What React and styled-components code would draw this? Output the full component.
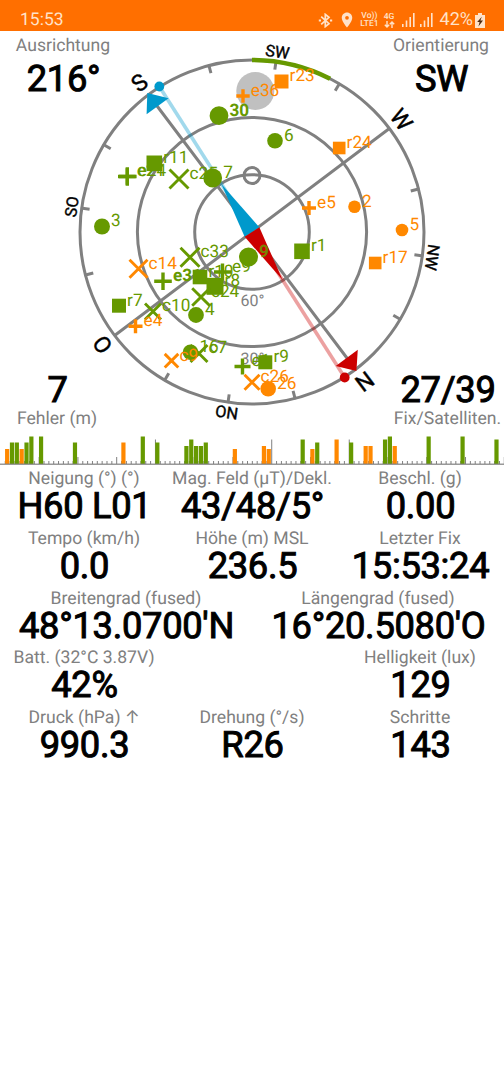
import React from 'react';
import styled, { createGlobalStyle } from 'styled-components';
import { MdLocationOn } from 'react-icons/md';

const GREEN = '#669900';
const ORANGE = '#ff8800';
const GREY = '#808080';
const BLUE = '#0099cc';
const RED = '#cc0000';

const CX = 252;
const CY = 201;
const R = 172;
const NORTH = 143;
const MAGNETIC = 147.5;

// Point on the dial, bearing in degrees clockwise from the top
const polar = (bearing, r) => {
  const a = (bearing * Math.PI) / 180;
  return [CX + r * Math.sin(a), CY - r * Math.cos(a)];
};
const points = list => list.map(p => p.join(',')).join(' ');

// y is measured from the top of the dial panel
const satellites = [
  { id: '9', shape: 'circle', x: 248.5, y: 226, r: 9.5, bold: true, labelColor: '#7a8200' },
  { id: 'e36', shape: 'plus', x: 243, y: 65, r: 6.7, color: ORANGE },
  { id: 'r23', shape: 'square', x: 281.5, y: 50.5, r: 7, color: ORANGE },
  { id: '30', shape: 'circle', x: 219, y: 84.7, r: 9.4, bold: true },
  { id: '6', shape: 'circle', x: 275, y: 109.7, r: 7.8 },
  { id: 'r24', shape: 'square', x: 339.2, y: 117, r: 6.3, color: ORANGE },
  { id: 'e5', shape: 'plus', x: 309, y: 177, r: 7, color: ORANGE },
  { id: '2', shape: 'circle', x: 354.5, y: 175.7, r: 6.3, color: ORANGE },
  { id: '5', shape: 'circle', x: 402, y: 199, r: 6.3, color: ORANGE },
  { id: 'r17', shape: 'square', x: 375.2, y: 232, r: 6.3, color: ORANGE },
  { id: 'r1', shape: 'square', x: 302, y: 220.3, r: 7.8 },
  { id: 'r11', shape: 'square', x: 154.3, y: 132.3, r: 7.8 },
  { id: 'e24', shape: 'plus', x: 127.3, y: 145.5, r: 9.3 },
  { id: 'e21', shape: 'plus', x: 127.3, y: 145.5, r: 8.3 },
  { id: 'c25', shape: 'cross', x: 179, y: 148, r: 9.5 },
  { id: '7', shape: 'circle', x: 212.7, y: 147, r: 9.4 },
  { id: '3', shape: 'circle', x: 102, y: 195.5, r: 8 },
  { id: 'c33', shape: 'cross', x: 190, y: 226.3, r: 9.5 },
  { id: 'c14', shape: 'cross', x: 138.5, y: 237.7, r: 9, color: ORANGE },
  { id: 'e31', shape: 'plus', x: 163, y: 250.3, r: 8.8, bold: true },
  { id: 'e9', shape: 'plus', x: 222.5, y: 241, r: 8.5 },
  { id: 'r10', shape: 'square', x: 200, y: 246, r: 7.3 },
  { id: 'r8', shape: 'square', x: 215, y: 255.3, r: 8.5 },
  { id: 'c24', shape: 'cross', x: 201, y: 266, r: 8.8 },
  { id: '4', shape: 'circle', x: 196, y: 284, r: 7.9 },
  { id: 'r7', shape: 'square', x: 119, y: 274.7, r: 7 },
  { id: 'c10', shape: 'cross', x: 153, y: 280.5, r: 8 },
  { id: 'e4', shape: 'plus', x: 135.5, y: 295.3, r: 7, color: ORANGE },
  { id: '16', shape: 'circle', x: 190.5, y: 321.2, r: 7.8 },
  { id: 'c7', shape: 'cross', x: 199, y: 322.5, r: 8.5 },
  { id: 'c9', shape: 'cross', x: 171.5, y: 329.7, r: 6.8, color: ORANGE },
  { id: 'e1', shape: 'plus', x: 242.5, y: 335.5, r: 8 },
  { id: 'r9', shape: 'square', x: 265.3, y: 331.3, r: 7 },
  { id: 'c26', shape: 'cross', x: 252, y: 351.3, r: 7.5, color: ORANGE },
  { id: '26', shape: 'circle', x: 268.2, y: 357.7, r: 7.8, color: ORANGE },
];

// [slot, height, weak]
const signals = [
  [1, 15, true], [2, 21.5], [3, 21.5], [4, 15, true], [5, 21.5], [6, 27.5], [8, 27.5],
  [15, 21.5], [25, 21.5, true], [29, 27.5], [32, 21.5], [38, 18], [39, 24.5], [40, 18],
  [41, 18], [42, 21.5], [48, 15, true], [54, 18, true], [55, 15, true], [62, 24.5],
  [64, 15, true], [65, 21.5], [69, 24.5, true], [72, 21.5], [75, 18, true], [76, 18, true],
  [79, 24.5], [80, 27.5], [81, 18, true], [88, 27.5], [95, 27.5], [102, 24.5],
];
const SLOT = 4.845;
const groupStarts = [32, 56, 72];

const rows = [
  [['Neigung (°) (°)', 'H60 L01'], ['Mag. Feld (µT)/Dekl.', '43/48/5°'], ['Beschl. (g)', '0.00']],
  [['Tempo (km/h)', '0.0'], ['Höhe (m) MSL', '236.5'], ['Letzter Fix', '15:53:24']],
  [['Breitengrad (fused)', "48°13.0700'N"], ['Längengrad (fused)', "16°20.5080'O"]],
  [['Batt. (32°C 3.87V)', '42%'], null, ['Helligkeit (lux)', '129']],
  [['Druck (hPa) ↑', '990.3'], ['Drehung (°/s)', 'R26'], ['Schritte', '143']],
];

const Marker = ({ shape, x, y, r, color = GREEN }) => {
  if (shape === 'circle') return <circle cx={x} cy={y} r={r} fill={color} />;
  if (shape === 'square') return <rect x={x - r} y={y - r} width={r * 2} height={r * 2} fill={color} />;
  const d = shape === 'plus'
    ? `M${x - r} ${y}H${x + r}M${x} ${y - r}V${y + r}`
    : `M${x - r} ${y - r}L${x + r} ${y + r}M${x - r} ${y + r}L${x + r} ${y - r}`;
  return <path d={d} stroke={color} strokeWidth={shape === 'plus' ? 3.4 : 2.9} fill="none" />;
};

const Satellite = ({ id, bold, labelColor, ...marker }) => (
  <g>
    <Marker {...marker} />
    <SatLabel x={marker.x + marker.r + 1.1} y={marker.y - 0.2} $bold={bold} fill={labelColor || marker.color || GREEN}>
      {id}
    </SatLabel>
  </g>
);

const DialLetter = ({ bearing, small, children }) => {
  const [x, y] = polar(bearing, small ? 176.3 : 179);
  return (
    <DialText $small={small} transform={`translate(${x} ${y}) rotate(${bearing})`}>{children}</DialText>
  );
};

const Compass = () => {
  const [arcX, arcY] = polar(27, R);
  const blueDot = polar(MAGNETIC + 180, R + 0.5);
  const redDot = polar(MAGNETIC, R + 0.5);
  const base = [polar(MAGNETIC - 90, 8.7), polar(MAGNETIC + 90, 8.7)];
  const ticks = Array.from({ length: 16 }, (_, i) => NORTH + i * 22.5).filter((_, i) => i % 4);
  const [wx, wy] = polar(NORTH - 90, R);
  const [ox, oy] = polar(NORTH + 90, R);
  const [nx, ny] = polar(NORTH, R - 8);
  const [sx, sy] = polar(NORTH + 180, R - 8);

  return (
    <Dial viewBox="0 0 504 400">
      <circle cx="255.3" cy="60" r="19" fill="#c0c0c0" />
      <g stroke={GREY} strokeWidth="3" fill="none">
        <circle cx={CX} cy={CY} r={R} />
        <circle cx={CX} cy={CY} r="114.6" />
        <circle cx={CX} cy={CY} r="57.3" />
        <circle cx={CX} cy={CY - 56.5} r="8" />
        <path d={`M${wx} ${wy}L${ox} ${oy}M${nx} ${ny}L${sx} ${sy}`} />
        {ticks.map(t => {
          const [x1, y1] = polar(t, R - 8);
          const [x2, y2] = polar(t, R + 1);
          return <line key={t} x1={x1} y1={y1} x2={x2} y2={y2} />;
        })}
      </g>
      <path d={`M${CX} ${CY - R}A${R} ${R} 0 0 1 ${arcX} ${arcY}`} stroke={GREEN} strokeWidth="4.6" fill="none" />

      <Elevation x="240.5" y="275">60°</Elevation>
      <Elevation x="240.5" y="332.5">30°</Elevation>

      <DialLetter bearing={NORTH}>N</DialLetter>
      <DialLetter bearing={NORTH + 90}>O</DialLetter>
      <DialLetter bearing={NORTH + 180}>S</DialLetter>
      <DialLetter bearing={NORTH - 90}>W</DialLetter>
      <DialLetter bearing={NORTH + 45} small>NO</DialLetter>
      <DialLetter bearing={NORTH + 135} small>SO</DialLetter>
      <DialLetter bearing={NORTH - 135} small>SW</DialLetter>
      <DialLetter bearing={NORTH - 45} small>NW</DialLetter>

      <g strokeWidth="3.6" strokeOpacity="0.37">
        <line x1={CX} y1={CY} x2={blueDot[0]} y2={blueDot[1]} stroke={BLUE} />
        <line x1={CX} y1={CY} x2={redDot[0]} y2={redDot[1]} stroke={RED} />
      </g>
      <polygon points={points([polar(MAGNETIC + 180, 57), ...base])} fill={BLUE} />
      <polygon points={points([polar(MAGNETIC, 57), ...base])} fill={RED} />
      <polygon points="147.3,62 168.6,67.3 146.6,83.2" fill={BLUE} />
      <polygon points="357.8,318.8 335.8,335 356.4,340" fill={RED} />
      <circle cx={blueDot[0]} cy={blueDot[1]} r="4.9" fill={BLUE} />
      <circle cx={redDot[0]} cy={redDot[1]} r="4.9" fill={RED} />

      {satellites.map(s => <Satellite key={s.id} {...s} />)}
    </Dial>
  );
};

const SignalChart = () => (
  <Chart viewBox="0 0 504 36">
    {Array.from({ length: 104 }, (_, n) => {
      const i = n + 1;
      const h = groupStarts.includes(i) ? 24.5 : i % 8 ? 3 : 7;
      return <rect key={i} x={i * SLOT - 0.1} y={33 - h} width="1" height={h} fill={GREY} />;
    })}
    {signals.map(([slot, h, weak]) => (
      <rect key={slot} x={slot * SLOT + 0.2} y={33 - h} width="4.2" height={h} fill={weak ? ORANGE : GREEN} />
    ))}
    <rect y="32.6" width="504" height="1.2" fill={GREY} />
  </Chart>
);

const Bluetooth = () => (
  <svg width="15" height="15" viewBox="0 0 15 15" stroke="currentColor" strokeWidth="1.7" fill="none">
    <path d="M3.2 3.6L11 10.6L7.3 13.6V1.4L11 4.4L3.2 11.4" />
    <path d="M0.8 7.5H3M12 7.5H14.2" strokeWidth="2" />
  </svg>
);

const SignalBars = () => (
  <svg width="13" height="14" viewBox="0 0 13 14" fill="currentColor">
    <rect x="0" y="11" width="1.6" height="3" />
    <rect x="3.7" y="7.5" width="1.6" height="6.5" />
    <rect x="7.4" y="4" width="1.6" height="10" />
    <rect x="11" y="0" width="1.6" height="14" />
  </svg>
);

const App = () => (
  <Screen>
    <GlobalStyles />
    <StatusBar>
      <Clock>15:53</Clock>
      <StatusIcons>
        <Bluetooth />
        <Pin><MdLocationOn size={18} /></Pin>
        <Network>
          <span>Vo))</span>
          <span>LTE1</span>
        </Network>
        <Network $end={2}>
          <span>4G</span>
          <svg width="11" height="7" viewBox="0 0 11 7" stroke="currentColor" strokeWidth="1.4" fill="none">
            <path d="M3 0V6M0.8 3.7L3 6L5.2 3.7M8 7V1M5.8 3.3L8 1L10.2 3.3" />
          </svg>
        </Network>
        <SignalBars />
        <SignalBars />
        <Percent>42%</Percent>
        <svg width="10" height="15" viewBox="0 0 10 15">
          <path d="M3 0H7V2H10V15H0V2H3Z" fill="currentColor" />
          <path d="M6.8 3.8L2.2 9H4.6L3.4 13.4L8 7.6H5.4Z" fill="#4d2a10" />
        </svg>
      </StatusIcons>
    </StatusBar>

    <DialPanel>
      <Compass />
      <Corner $width={126}>
        <Label>Ausrichtung</Label>
        <Value $top={6}>216°</Value>
      </Corner>
      <Corner $width={126} $end>
        <Label>Orientierung</Label>
        <Value $top={6}>SW</Value>
      </Corner>
      <Corner $width={114} $bottom>
        <Value>7</Value>
        <Label>Fehler (m)</Label>
      </Corner>
      <Corner $width={113} $end $bottom>
        <Value>27/39</Value>
        <Label>Fix/Satelliten.</Label>
      </Corner>
    </DialPanel>

    <SignalChart />

    <Readings>
      {rows.map((row, i) => (
        <Row key={i}>
          {row.map((cell, j) => (
            <Cell key={j}>
              {cell && <Label>{cell[0]}</Label>}
              {cell && <Value>{cell[1]}</Value>}
            </Cell>
          ))}
        </Row>
      ))}
    </Readings>
  </Screen>
);

export default App;

const GlobalStyles = createGlobalStyle`
  * { box-sizing: border-box; }
  body {
    margin: 0;
    background: #fff;
    font-family: Roboto, Inter, "DejaVu Sans", sans-serif;
    text-rendering: geometricPrecision;
  }
  svg { display: block; flex: none; }
`
const Screen = styled.main`
  display: flex;
  flex-direction: column;
  width: 504px;
  min-height: 1080px;
  background: #fff;
  color: #000;
`
const StatusBar = styled.header`
  display: flex;
  justify-content: space-between;
  height: 31px;
  padding: 9px 19px 0 20px;
  background: #ff6f00;
  color: #ffe2c9;
`
const Clock = styled.div`
  font-size: 17.5px;
  line-height: 23px;
`
const StatusIcons = styled.div`
  display: flex;
  align-items: center;
  gap: 5px;
  height: 22px;
`
const Pin = styled.span`
  margin-right: -1px;
`
const Network = styled.div`
  display: flex;
  flex-direction: column;
  align-items: center;
  margin-right: ${({ $end = 0 }) => $end}px;
  font-size: 8.5px;
  font-weight: 500;
  line-height: 8px;
`
const Percent = styled.div`
  margin: 0 -3px 0 2px;
  font-size: 18px;
  line-height: 24px;
`
const DialPanel = styled.section`
  display: grid;
  height: 400px;
`
const Dial = styled.svg`
  grid-area: 1 / 1;
  width: 504px;
  height: 400px;
  overflow: visible;
`
const Corner = styled.div`
  grid-area: 1 / 1;
  justify-self: ${({ $end }) => ($end ? 'end' : 'start')};
  align-self: ${({ $bottom }) => ($bottom ? 'end' : 'start')};
  width: ${({ $width }) => $width}px;
  padding: 3px 0 2px;
  text-align: center;
`
const Label = styled.div`
  height: 22px;
  color: #808080;
  font-size: 17.6px;
  line-height: 24px;
  white-space: nowrap;
`
const Value = styled.div`
  height: 34px;
  margin-top: ${({ $top = 0 }) => $top}px;
  font-size: 36.3px;
  line-height: 33px;
  letter-spacing: -0.3px;
  text-indent: 1px;
  white-space: nowrap;
  -webkit-text-stroke: 1px #000;
`
const SatLabel = styled.text`
  font-size: 17.2px;
  font-weight: ${({ $bold }) => ($bold ? 700 : 400)};
`
const Elevation = styled.text`
  font-size: 16px;
  fill: #808080;
`
const DialText = styled.text`
  font-size: ${({ $small }) => ($small ? 16.2 : 23)}px;
  text-anchor: middle;
  stroke: #000;
  stroke-width: 0.4px;
`
const Chart = styled.svg`
  width: 504px;
  height: 36px;
`
const Readings = styled.section`
  display: flex;
  flex-direction: column;
`
const Row = styled.div`
  display: grid;
  grid-auto-flow: column;
  grid-auto-columns: 1fr;
  height: 59.8px;
`
const Cell = styled.div`
  min-width: 0;
  text-align: center;
`
